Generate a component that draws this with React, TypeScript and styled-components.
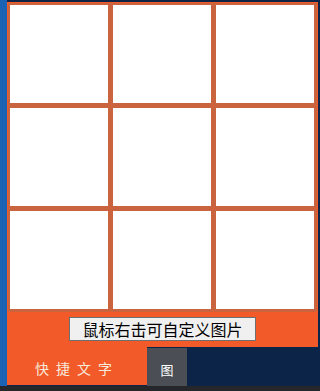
import styled, { createGlobalStyle } from "styled-components";

const GlobalStyle = createGlobalStyle`
  html, body {
    margin: 0;
    padding: 0;
  }
  body {
    width: 320px;
    height: 391px;
    overflow: hidden;
    font-family: "Noto Sans CJK SC", "Liberation Sans", sans-serif;
  }
`;

const Desktop = styled.div`
  width: 320px;
  height: 391px;
  box-sizing: border-box;
  padding: 2px 0 0 7px;
  display: flex;
  flex-direction: column;
  background:
    linear-gradient(to bottom, transparent 386px, #26272b 386px),
    linear-gradient(to right, #1a63b4 0 7px, #0b2448 7px);
`;

const Panel = styled.div`
  width: 311px;
  box-sizing: border-box;
  padding: 1px;
  background: #f25a29;
  display: flex;
  flex-direction: column;
`;

const Grid = styled.div`
  display: grid;
  grid-template-columns: repeat(3, 102px);
  grid-auto-rows: 102px;
  gap: 1px;
`;

// the shadows fill the 1px gaps, leaving only the crossing points orange
const Cell = styled.div`
  box-sizing: border-box;
  border: 2px solid #c9643f;
  background: #ffffff;
  box-shadow: 1px 0 0 #c9643f, 0 1px 0 #c9643f;
`;

const ButtonBar = styled.div`
  height: 35px;
  box-sizing: border-box;
  padding-top: 6px;
  display: flex;
  justify-content: center;
  align-items: flex-start;
`;

const HintButton = styled.button`
  width: 187px;
  height: 24px;
  box-sizing: border-box;
  padding: 0;
  margin: 0;
  border: 1px solid #6f6f6f;
  background: #f0f0f0;
  color: #000;
  font-family: "Noto Sans CJK SC", sans-serif;
  font-size: 16px;
  line-height: 22px;
`;

const Tabs = styled.div`
  display: flex;
  align-items: flex-start;
`;

const Tab = styled.div<{ $active?: boolean; $width: number; $spacing?: number }>`
  width: ${(p) => p.$width}px;
  height: 38px;
  margin-top: ${(p) => (p.$active ? 0 : 1)}px;
  box-sizing: border-box;
  display: flex;
  align-items: center;
  justify-content: center;
  background: ${(p) => (p.$active ? "#f25a29" : "#4b4f55")};
  color: ${(p) => (p.$active ? "#f7e9dc" : "#ffffff")};
  font-size: ${(p) => (p.$active ? 14 : 13)}px;
  letter-spacing: ${(p) => p.$spacing ?? 0}px;
  padding-top: 4px;
`;

export default function App() {
  const cells = Array.from({ length: 9 }, (_, i) => i);
  return (
    <>
      <GlobalStyle />
      <Desktop>
        <Panel>
          <Grid>
            {cells.map((i) => (
              <Cell key={i} />
            ))}
          </Grid>
          <ButtonBar>
            <HintButton>鼠标右击可自定义图片</HintButton>
          </ButtonBar>
        </Panel>
        <Tabs>
          <Tab $active $width={140} $spacing={7}>
            快捷文字
          </Tab>
          <Tab $width={40}>图</Tab>
        </Tabs>
      </Desktop>
    </>
  );
}
